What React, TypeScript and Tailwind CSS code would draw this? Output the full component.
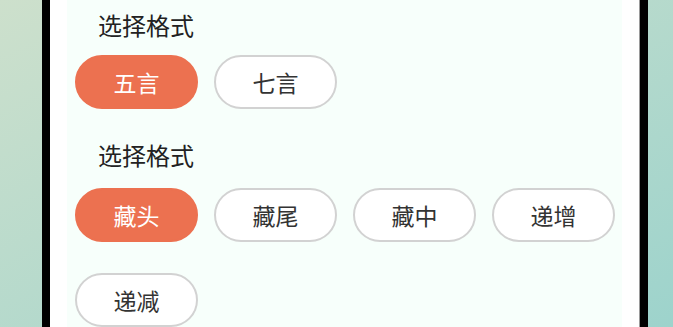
import React, { useState } from 'react';

const fontStack = { fontFamily: '"Noto Sans CJK SC", "Noto Sans", sans-serif' };

type OptionProps = {
  label: string;
  active: boolean;
  onClick: () => void;
};

const Option: React.FC<OptionProps> = ({ label, active, onClick }) => (
  <button
    onClick={onClick}
    className={
      active
        ? 'w-[123px] h-[54px] rounded-full bg-[#ec7150] text-white text-[23px] border-2 border-[#ec7150] flex items-center justify-center'
        : 'w-[123px] h-[54px] rounded-full bg-white text-[#333333] text-[23px] border-2 border-[#d2d2d2] flex items-center justify-center'
    }
  >
    {label}
  </button>
);

const App: React.FC = () => {
  const [length, setLength] = useState('五言');
  const [mode, setMode] = useState('藏头');

  const lengths = ['五言', '七言'];
  const modes = ['藏头', '藏尾', '藏中', '递增', '递减'];

  return (
    <div
      className="w-full h-[327px] overflow-hidden bg-gradient-to-br from-[#cde0cc] to-[#9dd3cc]"
      style={fontStack}
    >
      <div className="ml-[42px] w-[606px] h-full border-x-8 border-black">
        <div className="h-full bg-white px-[17px] border-r border-[#9a9a9a]">
          <div className="h-full bg-[#f7fffb] pl-2 pr-1 pt-[9px]">
            <div className="pl-[23px] h-[32px] leading-[32px] text-[24px] text-[#222222]">选择格式</div>
            <div className="mt-[14px] flex flex-wrap gap-x-4 gap-y-[31px]">
              {lengths.map((l) => (
                <Option key={l} label={l} active={length === l} onClick={() => setLength(l)} />
              ))}
            </div>

            <div className="mt-[30px] pl-[23px] h-[32px] leading-[32px] text-[24px] text-[#222222]">选择格式</div>
            <div className="mt-[17px] flex flex-wrap gap-x-4 gap-y-[31px]">
              {modes.map((m) => (
                <Option key={m} label={m} active={mode === m} onClick={() => setMode(m)} />
              ))}
            </div>
          </div>
        </div>
      </div>
    </div>
  );
};

export default App;
